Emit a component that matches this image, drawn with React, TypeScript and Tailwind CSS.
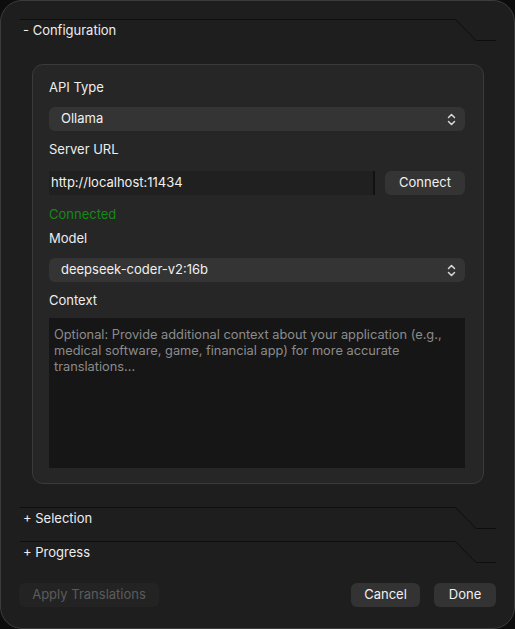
import React from "react";

const font = { fontFamily: "Inter, 'Noto Sans', sans-serif" };

const SectionHeader = ({ title }: { title: string }) => {
  return (
    <div className="flex h-[22px]">
      <div className="flex-1 border-t border-[#0e0e0e] pl-[3px] flex items-center text-[13px] text-[#ededed]">
        {title}
      </div>
      <svg width="41" height="22" viewBox="0 0 41 22" className="shrink-0">
        <path d="M0 0.5 H0.5 L21 21.5 H41" fill="none" stroke="#0e0e0e" strokeWidth="1" />
      </svg>
    </div>
  );
};

const UpDown = () => (
  <svg width="9" height="13" viewBox="0 0 9 13" fill="none" stroke="#d8d8d8" strokeWidth="1.5" strokeLinecap="round" strokeLinejoin="round">
    <path d="M1.5 4.5 L4.5 1.5 L7.5 4.5" />
    <path d="M1.5 8.5 L4.5 11.5 L7.5 8.5" />
  </svg>
);

const Select = ({ value }: { value: string }) => {
  return (
    <div className="h-6 rounded-md bg-[#343434] flex items-center justify-between pl-3 pr-[9px] text-[13px] text-[#f0f0f0]">
      <span>{value}</span>
      <UpDown />
    </div>
  );
};

const Label = ({ children, className }: { children: React.ReactNode; className?: string }) => (
  <div className={"text-[13px] leading-4 text-[#ededed] " + (className ?? "")}>{children}</div>
);

export default function App() {
  return (
    <div className="w-[515px] h-[629px] bg-[#0d0d0d]" style={font}>
      <div className="w-full h-full rounded-[22px] border border-[#3c3c3c] bg-[#1e1e1e] pt-[18px] pl-[19px] pr-[18px] pb-[21px] flex flex-col">
        <SectionHeader title="- Configuration" />
        <div className="mx-3 mt-[23px] rounded-[11px] border border-[#3a3a3a] bg-[#262626] pl-4 pr-[18px] pt-[14px] pb-[15px]">
          <Label>API Type</Label>
          <div className="mt-3">
            <Select value="Ollama" />
          </div>
          <Label className="mt-[10px]">Server URL</Label>
          <div className="mt-[14px] flex gap-[10px]">
            <div className="flex-1 h-6 bg-[#202020] border-r-2 border-[#111] flex items-center pl-[2px] text-[13px] text-[#f0f0f0]">
              http://localhost:11434
            </div>
            <button className="w-20 h-6 rounded-md bg-[#343434] text-[13px] text-[#f0f0f0]">Connect</button>
          </div>
          <div className="mt-[11px] text-[13px] leading-4 text-[#148a14]">Connected</div>
          <Label className="mt-2">Model</Label>
          <div className="mt-3">
            <Select value="deepseek-coder-v2:16b" />
          </div>
          <Label className="mt-[10px]">Context</Label>
          <div className="mt-[10px] h-[150px] bg-[#161616] px-[5px] pt-[9px] text-[12.8px] leading-4 text-[#8c8c8c]">
            Optional: Provide additional context about your application (e.g., medical software, game, financial app) for more accurate translations...
          </div>
        </div>
        <div className="mt-[23px]">
          <SectionHeader title="+ Selection" />
        </div>
        <div className="mt-3">
          <SectionHeader title="+ Progress" />
        </div>
        <div className="mt-auto flex items-center">
          <button className="-ml-[1px] w-[140px] h-6 rounded-md bg-[#232323] text-[13px] text-[#5c5c5c]">
            Apply Translations
          </button>
          <div className="flex-1" />
          <button className="w-[69px] h-6 rounded-md bg-[#333333] text-[13px] text-[#f0f0f0]">Cancel</button>
          <button className="ml-[14px] w-[62px] h-6 rounded-md bg-[#333333] text-[13px] text-[#f0f0f0]">Done</button>
        </div>
      </div>
    </div>
  );
}
